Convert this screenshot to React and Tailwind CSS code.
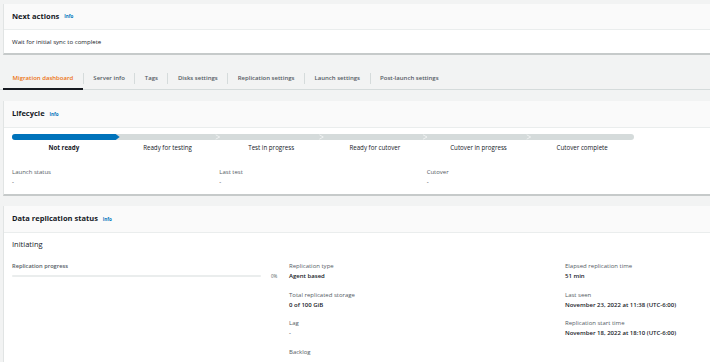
const TABS = ['Migration dashboard', 'Server info', 'Tags', 'Disks settings', 'Replication settings', 'Launch settings', 'Post-launch settings']
const STAGES = ['Not ready', 'Ready for testing', 'Test in progress', 'Ready for cutover', 'Cutover in progress', 'Cutover complete']

function Info() {
  return <span className="text-[4.5px] font-bold text-[#0073bb] ml-[5px] leading-none">Info</span>
}

function Header({ title, h }) {
  return (
    <div className={`${h} bg-[#fafafa] border-b border-[#eaeded] px-[8px] flex items-center`}>
      <span className="text-[7.5px] font-bold text-[#16191f] leading-none">{title}</span>
      <Info />
    </div>
  )
}

function Field({ label, value, strong }) {
  return (
    <div className="h-[28.7px]">
      <div className="text-[6px] text-[#545b64] leading-[10px]">{label}</div>
      {value && <div className={`text-[6px] leading-[10px] text-[#16191f] ${strong ? 'font-semibold' : ''}`}>{value}</div>}
    </div>
  )
}

function LifecycleBar() {
  const w = 622
  const seg = w / 6
  return (
    <svg width={w} height="6" viewBox={`0 0 ${w} 6`} className="block">
      <rect x="0" y="0" width={w} height="6" rx="3" fill="#d5dbdb" />
      <path d={`M3 0 H${seg} L${seg + 4} 3 L${seg} 6 H3 A3 3 0 0 1 3 0 Z`} fill="#0073bb" />
      {[2, 3, 4, 5].map(i => (
        <path key={i} d={`M${seg * (i - 1) + 104 - 4} 0.8 L${seg * (i - 1) + 104} 3 L${seg * (i - 1) + 104 - 4} 5.2`} stroke="#ffffff" strokeWidth="0.6" fill="none" />
      ))}
    </svg>
  )
}

export default function App() {
  return (
    <div className="w-[710px] h-[362px] overflow-hidden bg-[#f2f3f3] font-['Open_Sans',sans-serif] pt-[4px] pl-[3px]">
      <div className="bg-white border-l border-[#e1e4e4] border-b-2 border-b-[#c6caca]">
        <Header title="Next actions" h="h-[26px]" />
        <div className="h-[23px] px-[8px] flex items-center text-[6.1px] text-[#16191f]">Wait for initial sync to complete</div>
      </div>

      <div className="mt-[12px] flex items-center border-b border-[#d5dbdb] -ml-[3px] pl-[3px]">
        {TABS.map((t, i) => (
          <div key={t} className="flex items-center">
            {i > 0 && <div className="w-px h-[11px] bg-[#d5dbdb]" />}
            <div className={`h-[23px] px-[9.5px] flex items-center text-[6px] font-semibold leading-none -mb-px ${i === 0 ? 'text-[#ec7211] border-b-2 border-[#16191f]' : 'text-[#545b64] border-b-2 border-transparent'}`}>
              {t}
            </div>
          </div>
        ))}
      </div>

      <div className="mt-[11px] bg-white border-l border-[#e1e4e4] border-b-2 border-b-[#c6caca]">
        <Header title="Lifecycle" h="h-[27px]" />
        <div className="px-[8px] pt-[6px] h-[66px]">
          <LifecycleBar />
          <div className="w-[622px] flex mt-[4px]">
            {STAGES.map((s, i) => (
              <div key={s} className={`flex-1 text-center text-[6.2px] leading-[8px] ${i === 0 ? 'font-bold text-[#16191f]' : 'text-[#16191f]'}`}>{s}</div>
            ))}
          </div>
          <div className="w-[622px] grid grid-cols-3 mt-[15px]">
            {['Launch status', 'Last test', 'Cutover'].map(l => (
              <div key={l}>
                <div className="text-[6px] text-[#545b64] leading-[10px]">{l}</div>
                <div className="text-[6px] text-[#16191f] leading-[10px]">-</div>
              </div>
            ))}
          </div>
        </div>
      </div>

      <div className="mt-[10px] bg-white border-l border-[#e1e4e4] h-[200px]">
        <Header title="Data replication status" h="h-[27px]" />
        <div className="px-[8px]">
          <div className="h-[24px] flex items-center text-[7.5px] text-[#16191f]">Initiating</div>
          <div className="grid grid-cols-[277px_276px_1fr] pt-[4px]">
            <div>
              <div className="text-[5.7px] font-semibold text-[#545b64] leading-[10px]">Replication progress</div>
              <div className="flex items-center mt-[2px]">
                <div className="w-[249px] h-[2px] rounded-full bg-[#eaeded]" />
                <span className="ml-[10px] text-[4.5px] text-[#545b64]">0%</span>
              </div>
            </div>
            <div>
              <Field label="Replication type" value="Agent based" strong />
              <Field label="Total replicated storage" value="0 of 100 GiB" strong />
              <Field label="Lag" value="-" />
              <Field label="Backlog" />
            </div>
            <div>
              <Field label="Elapsed replication time" value="51 min" strong />
              <Field label="Last seen" value="November 23, 2022 at 11:38 (UTC-6:00)" strong />
              <Field label="Replication start time" value="November 18, 2022 at 18:10 (UTC-6:00)" strong />
            </div>
          </div>
        </div>
      </div>
    </div>
  )
}
